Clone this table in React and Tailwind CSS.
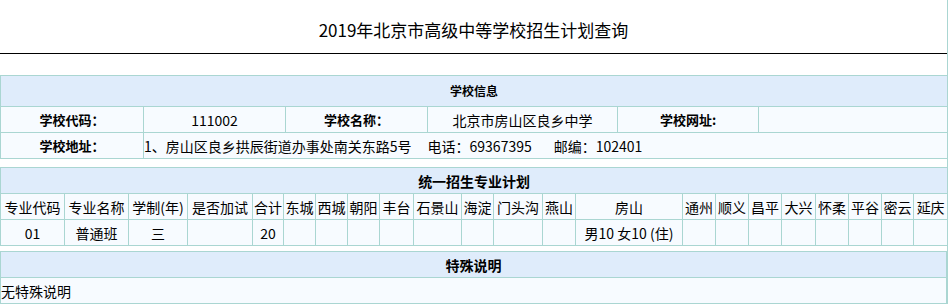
import React from 'react';

const line = 'border border-[#aad6d2]';
const head = `${line} bg-[#dfecfb] font-bold text-center`;
const cell = `${line} bg-[#f7fbff] text-center`;

const planCols = [64, 64, 59, 65, 31, 32, 32, 32, 34, 48, 32, 49, 33, 107, 33, 33, 33, 34, 33, 33, 32, 34];
const planHead = ['专业代码', '专业名称', '学制(年)', '是否加试', '合计', '东城', '西城', '朝阳', '丰台', '石景山', '海淀', '门头沟', '燕山', '房山', '通州', '顺义', '昌平', '大兴', '怀柔', '平谷', '密云', '延庆'];
const planRow = ['01', '普通班', '三', '', '20', '', '', '', '', '', '', '', '', '男10 女10 (住)', '', '', '', '', '', '', '', ''];

const App = () => {
  return (
    <div className="w-[948px] h-[304px] overflow-hidden bg-white border-r border-[#aad6d2] text-black text-[14px] leading-none" style={{ fontFamily: '"Noto Sans CJK SC", "Noto Sans", sans-serif' }}>
      <div className="h-[54px] border-b border-black flex items-center justify-center pt-[6px]">
        <h1 className="text-[17px]">2019年北京市高级中等学校招生计划查询</h1>
      </div>

      <div className="h-[21px]" />

      {/* 学校信息 */}
      <table className="w-[947px] table-fixed border-collapse">
        <colgroup>
          <col className="w-[143px]" />
          <col className="w-[142px]" />
          <col className="w-[142px]" />
          <col className="w-[190px]" />
          <col className="w-[141px]" />
          <col className="w-[189px]" />
        </colgroup>
        <tbody>
          <tr className="h-[31px]">
            <td colSpan={6} className={`${head} text-[12px]`}>学校信息</td>
          </tr>
          <tr className="h-[26px]">
            <td className={`${cell} font-bold text-[13px]`}>学校代码：</td>
            <td className={cell}>111002</td>
            <td className={`${cell} font-bold text-[13px]`}>学校名称：</td>
            <td className={cell}>北京市房山区良乡中学</td>
            <td className={`${cell} font-bold text-[13px]`}>学校网址:</td>
            <td className={cell}></td>
          </tr>
          <tr className="h-[26px]">
            <td className={`${cell} font-bold text-[13px]`}>学校地址：</td>
            <td colSpan={5} className={`${cell} text-left whitespace-nowrap`}>
              1、房山区良乡拱辰街道办事处南关东路5号
              <span className="ml-[16px]">电话：69367395</span>
              <span className="ml-[22px]">邮编：102401</span>
            </td>
          </tr>
        </tbody>
      </table>

      <div className="h-[8px]" />

      {/* 统一招生专业计划 */}
      <table className="w-[947px] table-fixed border-collapse">
        <colgroup>
          {planCols.map((w, i) => (
            <col key={i} style={{ width: w }} />
          ))}
        </colgroup>
        <tbody>
          <tr className="h-[26px]">
            <td colSpan={22} className={head}>统一招生专业计划</td>
          </tr>
          <tr className="h-[26px]">
            {planHead.map((t) => (
              <td key={t} className={`${cell} whitespace-nowrap`}>{t}</td>
            ))}
          </tr>
          <tr className="h-[26px]">
            {planRow.map((t, i) => (
              <td key={i} className={`${cell} whitespace-nowrap`}>{t}</td>
            ))}
          </tr>
        </tbody>
      </table>

      <div className="h-[5px]" />

      {/* 特殊说明 */}
      <table className="w-[947px] table-fixed border-collapse">
        <tbody>
          <tr className="h-[26px]">
            <td className={head}>特殊说明</td>
          </tr>
          <tr className="h-[26px]">
            <td className={`${cell} text-left`}>无特殊说明</td>
          </tr>
        </tbody>
      </table>
    </div>
  );
};

export default App;
